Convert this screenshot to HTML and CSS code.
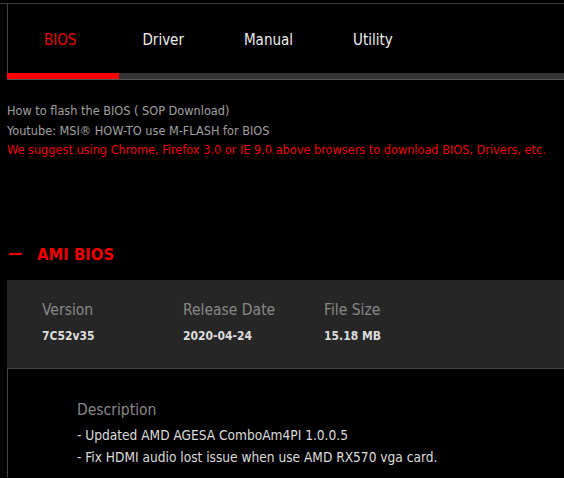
FILE: index.html
```html
<!DOCTYPE html>
<html lang="en">

<head>
    <meta charset="UTF-8">
    <meta name="viewport" content="width=device-width, initial-scale=1.0">
    <title>Support - BIOS</title>
    <link rel="stylesheet" href="styles.css">
</head>

<body>
    <div class="pageWrapper">
        <!-- Abas -->
        <div class="tabs">
            <div class="tabList">
                <a class="tab active" href="javascript:void(0)">BIOS</a>
                <a class="tab" href="javascript:void(0)">Driver</a>
                <a class="tab" href="javascript:void(0)">Manual</a>
                <a class="tab" href="javascript:void(0)">Utility</a>
            </div>
            <div class="tabBar">
                <div class="tabBarActive"></div>
            </div>
        </div>

        <div class="notes">
            <p>How to flash the BIOS ( SOP Download)</p>
            <p>Youtube: MSI® HOW-TO use M-FLASH for BIOS</p>
            <p class="warn">We suggest using Chrome, Firefox 3.0 or IE 9.0 above browsers to download BIOS, Drivers, etc.</p>
        </div>

        <h2 class="sectionTitle"><span class="dash"></span>AMI BIOS</h2>

        <div class="biosInfo">
            <div class="infoCol">
                <span class="infoLabel">Version</span>
                <span class="infoValue">7C52v35</span>
            </div>
            <div class="infoCol">
                <span class="infoLabel">Release Date</span>
                <span class="infoValue">2020-04-24</span>
            </div>
            <div class="infoCol">
                <span class="infoLabel">File Size</span>
                <span class="infoValue">15.18 MB</span>
            </div>
        </div>

        <div class="biosDesc">
            <span class="infoLabel">Description</span>
            <p>- Updated AMD AGESA ComboAm4PI 1.0.0.5</p>
            <p>- Fix HDMI audio lost issue when use AMD RX570 vga card.</p>
        </div>
    </div>
</body>

</html>
```

FILE: styles.css
```css
body {
    margin: 0;
    background-color: #000;
    color: #fff;
    font-family: "DejaVu Sans", sans-serif;
    font-stretch: condensed;
    height: 478px;
    overflow: hidden;
}

.pageWrapper {
    margin-top: 3px;
    border-top: 1px solid #3c3c3c;
}

/* Abas */
.tabs {
    margin-left: 7px;
}

.tabList {
    display: flex;
    height: 69px;
    align-items: center;
    padding-left: 36px;
    gap: 60px;
    border-left: 1px solid #444;
}

.tab {
    color: #eee;
    text-decoration: none;
    font-size: 15px;
    padding-top: 2px;
}

.tab.active {
    color: #e60000;
    margin-right: 6px;
}

.tabBar {
    height: 6px;
    background-color: #333;
    border-bottom: 1px solid #555;
}

.tabBarActive {
    width: 112px;
    height: 100%;
    background-color: #f00;
}

/* Notas */
.notes {
    margin: 21px 0 0 7px;
    font-size: 12.6px;
    line-height: 19.5px;
    color: #a0a0a0;
}

.notes p {
    margin: 0;
}

.notes .warn {
    color: #ee0000;
}

.sectionTitle {
    display: flex;
    align-items: center;
    margin: 84px 0 0 9px;
    font-size: 16.5px;
    font-weight: bold;
    color: #ee0000;
    line-height: 21px;
}

.dash {
    display: inline-block;
    width: 13px;
    height: 2px;
    background-color: #ee0000;
    margin-right: 15px;
}

.biosInfo {
    display: flex;
    margin: 15px 0 0 7px;
    padding: 21px 35px 0;
    height: 67px;
    background-color: #262626;
    border-bottom: 1px solid #444;
}

.infoCol {
    display: flex;
    flex-direction: column;
    width: 141px;
    gap: 10px;
}

.infoLabel {
    font-size: 15.5px;
    color: #888;
}

.infoValue {
    font-size: 12px;
    font-weight: bold;
    color: #ddd;
}

.biosDesc {
    margin-left: 7px;
    border-left: 1px solid #444;
    padding: 32px 69px 0;
    height: 76px;
}

.biosDesc p {
    margin: 0;
    font-size: 13.6px;
    line-height: 22px;
    color: #ddd;
}

.biosDesc .infoLabel {
    display: block;
    margin-bottom: 5px;
}
```
